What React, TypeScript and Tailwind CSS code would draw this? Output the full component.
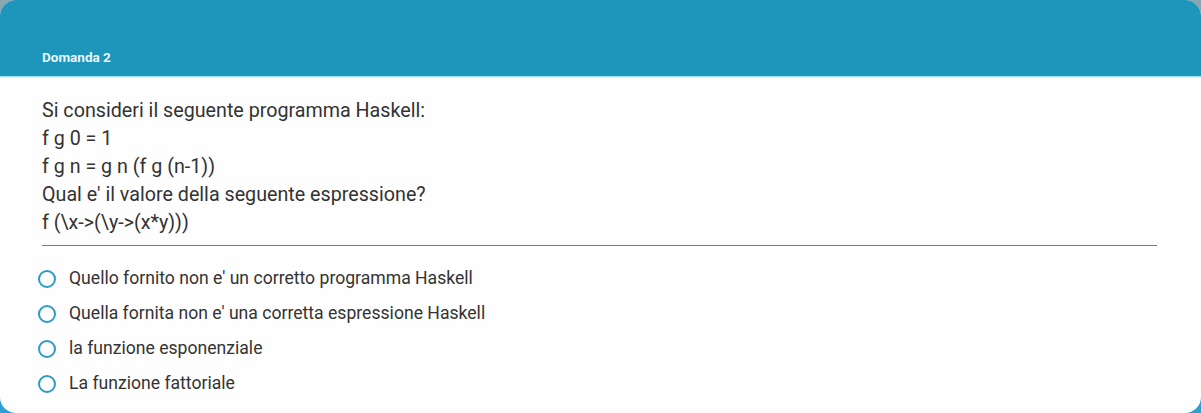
const options = [
  "Quello fornito non e' un corretto programma Haskell",
  "Quella fornita non e' una corretta espressione Haskell",
  "la funzione esponenziale",
  "La funzione fattoriale",
];

const question = [
  "Si consideri il seguente programma Haskell:",
  "f g 0 = 1",
  "f g n = g n (f g (n-1))",
  "Qual e' il valore della seguente espressione?",
  "f (\\x->(\\y->(x*y)))",
];

export default function App() {
  return (
    <div className="h-[413px] w-[1201px] bg-gradient-to-b from-[#8aa7b1] via-[#4f9fc0] to-[#2d9fd4] font-['Roboto',sans-serif]">
      <div className="flex h-full flex-col overflow-hidden rounded-2xl bg-[#fefefe]">
        {/* Header */}
        <div className="flex h-[77px] items-end border-b border-[#8fe3f3] bg-[#1e95bb] px-[42px] pb-[9px]">
          <span className="text-[13.5px] font-bold text-[#e8f7fb]">Domanda 2</span>
        </div>

        {/* Question */}
        <div className="px-[42px] pt-[20px]">
          <div className="text-[19.7px] leading-[28px] text-[#333]">
            {question.map((line) => (
              <div key={line}>{line}</div>
            ))}
          </div>
          <div className="mr-[2px] mt-[8px] h-px bg-[#7a7a7a]" />

          {/* Answers */}
          <div className="mt-[15px] flex flex-col">
            {options.map((opt) => (
              <label key={opt} className="flex h-[35px] cursor-pointer items-center gap-[13px]">
                <span className="-ml-[4px] h-[18px] w-[18px] rounded-full border-2 border-[#2d9cc4]" />
                <span className="text-[17.6px] text-[#333]">{opt}</span>
              </label>
            ))}
          </div>
        </div>
      </div>
    </div>
  );
}
